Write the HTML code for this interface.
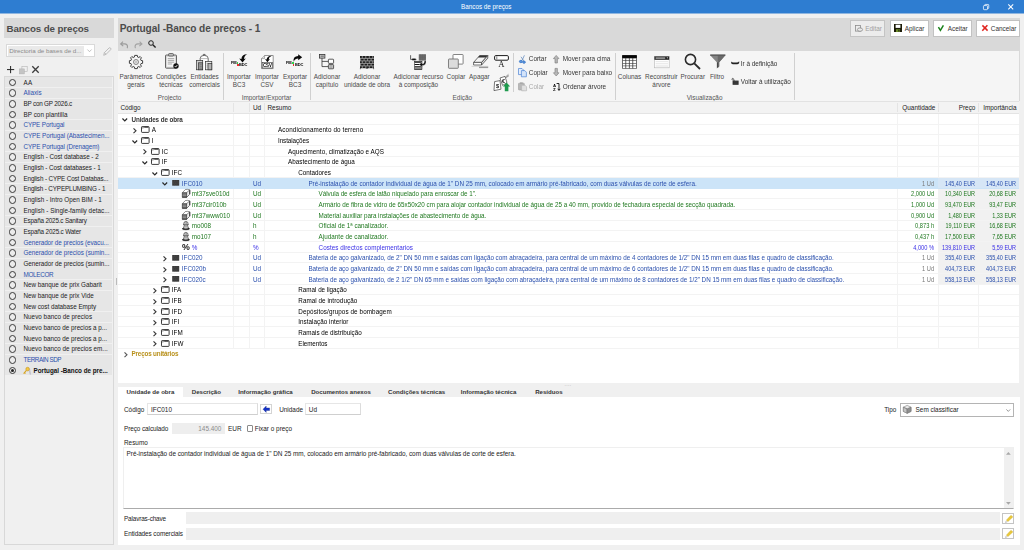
<!DOCTYPE html><html><head><meta charset="utf-8"><title>Bancos de preços</title><style>
*{box-sizing:border-box;margin:0;padding:0}
html,body{width:1024px;height:550px;overflow:hidden;background:#f0f0f0}
body{font-family:"Liberation Sans",sans-serif;font-size:6.4px;color:#000;position:relative;line-height:1}
.a{position:absolute;white-space:nowrap}
.t{position:absolute;white-space:nowrap;line-height:8px;height:8px}
.c{text-align:center}
.r{text-align:right}
.b{font-weight:bold}
.bl{color:#2b50ad}
.gr{color:#1f781f}
.pu{color:#3a2fe6}
.gy{color:#777}
.btn{position:absolute;top:19.5px;height:17px;background:#fff;border:1px solid #c2c2c2}
.sep{position:absolute;top:52.6px;height:47.4px;width:1px;background:#d0d0d0}
.row{position:absolute;left:118px;width:901.4px;height:10.67px;border-bottom:0.55px solid #f3f3f3;font-size:6.3px}
.li{position:absolute;left:5.3px;width:107.2px;height:10.1px;background:#e6e6e6;font-size:6.3px}
.rad{position:absolute;left:3.5px;top:1.35px;width:7.5px;height:7.5px;border:1px solid #3a3a3a;border-radius:50%;background:#ebebeb}
svg{position:absolute;overflow:visible}
</style></head><body>
<div class="a" style="left:0;top:0;width:1024px;height:13px;background:#2e7dd1"></div>
<div class="a" style="left:0;top:13px;width:1024px;height:1px;background:#8fb6e0"></div>
<div class="t c" style="left:436.3px;width:100px;top:2.9px;color:#fff;font-size:6.3px">Bancos de preços</div>
<svg style="left:982.6px;top:3.9px" width="6.2" height="6.2" viewBox="0 0 7 7" fill="none" stroke="#fff" stroke-width="0.85"><rect x="0.5" y="1.8" width="4.6" height="4.6" rx="0.8"/><path d="M1.9 1.8V1.2Q1.9 0.5 2.6 0.5H5.8Q6.5 0.5 6.5 1.2V4.4Q6.5 5.1 5.8 5.1H5.1"/></svg>
<svg style="left:1008.2px;top:3.9px" width="5.9" height="6.1" viewBox="0 0 6 6" stroke="#fff" stroke-width="1.05"><path d="M0.3 0.3L5.3 5.3M5.3 0.3L0.3 5.3"/></svg>
<div class="a" style="left:4.3px;top:18.2px;width:109.4px;height:19.8px;background:#d9d9d9"></div>
<div class="a b" style="left:6.5px;top:22.1px;font-size:9.75px;color:#4c4c4c;font-weight:bold;letter-spacing:-0.1px;line-height:14px">Bancos de preços</div>
<div class="a" style="left:6px;top:44.3px;width:88.8px;height:13.2px;background:#fff;border:0.6px solid #d9d9d9"></div>
<div class="a" style="left:7.8px;top:46px;width:76.4px;height:9.8px;background:#e9e9e9"></div>
<div class="t" style="left:9.2px;top:47.2px;font-size:6.2px;color:#8a8a8a">Directoria de bases de d...</div>
<svg style="left:87.3px;top:49.3px" width="5" height="3.5" viewBox="0 0 5 3.5" fill="none" stroke="#999" stroke-width="0.6"><path d="M0.4 0.5L2.5 2.7L4.6 0.5"/></svg>
<svg style="left:102.5px;top:46.5px" width="9" height="9" viewBox="0 0 9 9" fill="none" stroke="#a8a8a8" stroke-width="0.7"><path d="M0.7 8.3L1.4 5.6L6 1Q6.8 0.3 7.6 1.1Q8.4 1.9 7.7 2.7L3.1 7.3Z M1.4 5.6L3.1 7.3"/></svg>
<svg style="left:6.8px;top:66.2px" width="7.2" height="7.2" viewBox="0 0 7.2 7.2" stroke="#222" stroke-width="1"><path d="M3.6 0V7.2M0 3.6H7.2"/></svg>
<svg style="left:18.6px;top:65.5px" width="8.6" height="8.2" viewBox="0 0 8.6 8.2"><rect x="2.9" y="0.4" width="5.3" height="5.3" fill="#f0f0f0" stroke="#b4b4b4" stroke-width="0.6"/><rect x="0.3" y="2.9" width="5" height="5" fill="#c4c4c4" stroke="#b0b0b0" stroke-width="0.5"/></svg>
<svg style="left:31.5px;top:66.3px" width="7" height="7" viewBox="0 0 7 7" stroke="#3c3c3c" stroke-width="1.3"><path d="M0.3 0.3L6.7 6.7M6.7 0.3L0.3 6.7"/></svg>
<div class="a" style="left:4.3px;top:76px;width:109.4px;height:469.4px;background:#f0f0f0;border:0.6px solid #d8d8d8"></div>
<div class="li" style="top:77.40px"><div class="rad"></div><div class="t" style="left:18.2px;top:1.60px;color:#222;letter-spacing:0.396px;">AA</div></div>
<div class="li" style="top:88.07px"><div class="rad"></div><div class="t bl" style="left:18.2px;top:0.93px;letter-spacing:-0.017px;">Aliaxis</div></div>
<div class="li" style="top:98.73px"><div class="rad"></div><div class="t" style="left:18.2px;top:1.27px;color:#222;letter-spacing:-0.194px;">BP con GP 2026.c</div></div>
<div class="li" style="top:109.40px"><div class="rad"></div><div class="t" style="left:18.2px;top:1.60px;color:#222;letter-spacing:0.046px;">BP con plantilla</div></div>
<div class="li" style="top:120.07px"><div class="rad"></div><div class="t bl" style="left:18.2px;top:0.93px;letter-spacing:-0.114px;">CYPE Portugal</div></div>
<div class="li" style="top:130.73px"><div class="rad"></div><div class="t bl" style="left:18.2px;top:1.27px;letter-spacing:-0.064px;">CYPE Portugal (Abastecimen...</div></div>
<div class="li" style="top:141.40px"><div class="rad"></div><div class="t bl" style="left:18.2px;top:1.60px;letter-spacing:-0.075px;">CYPE Portugal (Drenagem)</div></div>
<div class="li" style="top:152.07px"><div class="rad"></div><div class="t" style="left:18.2px;top:0.93px;color:#222;letter-spacing:-0.030px;">English - Cost database - 2</div></div>
<div class="li" style="top:162.73px"><div class="rad"></div><div class="t" style="left:18.2px;top:1.27px;color:#222;letter-spacing:-0.068px;">English - Cost databases - 1</div></div>
<div class="li" style="top:173.40px"><div class="rad"></div><div class="t" style="left:18.2px;top:1.60px;color:#222;letter-spacing:-0.124px;">English - CYPE Cost Databas...</div></div>
<div class="li" style="top:184.07px"><div class="rad"></div><div class="t" style="left:18.2px;top:0.93px;color:#222;letter-spacing:-0.137px;">English - CYPEPLUMBING - 1</div></div>
<div class="li" style="top:194.73px"><div class="rad"></div><div class="t" style="left:18.2px;top:1.27px;color:#222;letter-spacing:0.012px;">English - Intro Open BIM - 1</div></div>
<div class="li" style="top:205.40px"><div class="rad"></div><div class="t" style="left:18.2px;top:1.60px;color:#222;letter-spacing:0.044px;">English - Single-family detac...</div></div>
<div class="li" style="top:216.07px"><div class="rad"></div><div class="t" style="left:18.2px;top:0.93px;color:#222;letter-spacing:-0.166px;">España 2025.c Sanitary</div></div>
<div class="li" style="top:226.73px"><div class="rad"></div><div class="t" style="left:18.2px;top:1.27px;color:#222;letter-spacing:-0.147px;">España 2025.c Water</div></div>
<div class="li" style="top:237.40px"><div class="rad"></div><div class="t bl" style="left:18.2px;top:1.60px;letter-spacing:-0.053px;">Generador de precios (evacu...</div></div>
<div class="li" style="top:248.07px"><div class="rad"></div><div class="t bl" style="left:18.2px;top:0.93px;letter-spacing:-0.026px;">Generador de precios (sumin...</div></div>
<div class="li" style="top:258.73px"><div class="rad"></div><div class="t" style="left:18.2px;top:1.27px;color:#222;letter-spacing:-0.026px;">Generador de precios (sumin...</div></div>
<div class="li" style="top:269.40px"><div class="rad"></div><div class="t bl" style="left:18.2px;top:1.60px;letter-spacing:-0.292px;">MOLECOR</div></div>
<div class="li" style="top:280.07px"><div class="rad"></div><div class="t" style="left:18.2px;top:0.93px;color:#222;letter-spacing:-0.010px;">New banque de prix Gabarit</div></div>
<div class="li" style="top:290.73px"><div class="rad"></div><div class="t" style="left:18.2px;top:1.27px;color:#222;letter-spacing:-0.004px;">New banque de prix Vide</div></div>
<div class="li" style="top:301.40px"><div class="rad"></div><div class="t" style="left:18.2px;top:1.60px;color:#222;letter-spacing:-0.022px;">New cost database Empty</div></div>
<div class="li" style="top:312.07px"><div class="rad"></div><div class="t" style="left:18.2px;top:0.93px;color:#222;letter-spacing:0.031px;">Nuevo banco de precios</div></div>
<div class="li" style="top:322.73px"><div class="rad"></div><div class="t" style="left:18.2px;top:1.27px;color:#222;letter-spacing:-0.004px;">Nuevo banco de precios a p...</div></div>
<div class="li" style="top:333.40px"><div class="rad"></div><div class="t" style="left:18.2px;top:1.60px;color:#222;letter-spacing:-0.004px;">Nuevo banco de precios a p...</div></div>
<div class="li" style="top:344.07px"><div class="rad"></div><div class="t" style="left:18.2px;top:0.93px;color:#222;letter-spacing:0.019px;">Nuevo banco de precios em...</div></div>
<div class="li" style="top:354.73px"><div class="rad"></div><div class="t bl" style="left:18.2px;top:1.27px;letter-spacing:-0.436px;">TERRAIN SDP</div></div>
<div class="li" style="top:365.40px"><div class="rad"><div class="a" style="left:1.15px;top:1.15px;width:3.2px;height:3.2px;border-radius:50%;background:#222"></div></div><svg style="left:17.8px;top:1.2px" width="8.4" height="7.8" viewBox="0 0 8.4 7.8"><path d="M6.6 1.6L7.6 7.4M6.2 3.4L7.2 7.6" stroke="#b8b8c4" stroke-width="0.7" fill="none"/><circle cx="4.6" cy="2.1" r="1.8" fill="#f5c842" stroke="#b8860b" stroke-width="0.5"/><path d="M3.4 3.3L0.6 6.6M1.5 5.6L2.5 6.5" stroke="#d9a520" stroke-width="1.1" fill="none"/></svg><div class="t b" style="left:28.3px;top:1.60px;color:#111;letter-spacing:-0.019px;">Portugal -Banco de pre...</div></div>
<div class="a" style="left:115.6px;top:278px;width:0.6px;height:7px;background:#bbb"></div>
<div class="a" style="left:118px;top:18.2px;width:902px;height:32.6px;background:#d9d9d9"></div>
<div class="a b" style="left:119.7px;top:22.1px;font-size:10.15px;color:#4c4c4c;letter-spacing:-0.1px;line-height:14px">Portugal -Banco de preços - 1</div>
<svg style="left:120.4px;top:41px" width="8.6" height="7.5" viewBox="0 0 8 7" fill="none" stroke="#9c9c9c" stroke-width="1.05"><path d="M2.8 0.5L0.6 2.7L3 4.8M0.8 2.7H4.4Q7 2.9 7 5.2Q7 6 6.6 6.6"/></svg>
<svg style="left:133.6px;top:41px" width="8.6" height="7.5" viewBox="0 0 8 7" fill="none" stroke="#a4a4a4" stroke-width="1.05"><path d="M5.2 0.5L7.4 2.7L5 4.8M7.2 2.7H3.6Q1 2.9 1 5.2Q1 6 1.4 6.6"/></svg>
<svg style="left:147.8px;top:40.2px" width="8" height="8" viewBox="0 0 8 8" fill="none" stroke="#222" stroke-width="1"><circle cx="3" cy="3" r="2.3"/><path d="M4.8 4.8L7.6 7.6" stroke-width="1.4"/></svg>
<div class="btn" style="left:850px;width:35.4px;background:#ececec;border-color:#c4c4c4"></div>
<div class="btn" style="left:889.6px;width:39px"></div>
<div class="btn" style="left:932.6px;width:39.2px"></div>
<div class="btn" style="left:976px;width:43.8px"></div>
<svg style="left:855.2px;top:24.6px" width="8" height="7.5" viewBox="0 0 8 7.5" fill="none" stroke="#8c8c8c" stroke-width="0.8"><rect x="0.5" y="0.5" width="5" height="5.6"/><ellipse cx="5" cy="4.6" rx="2.6" ry="1.7" fill="#ececec"/></svg>
<div class="t" style="left:865.2px;top:24.8px;color:#a0a0a0">Editar</div>
<svg style="left:894.4px;top:24.4px" width="8" height="8" viewBox="0 0 8 8"><rect x="0" y="0" width="8" height="8" fill="#1c1c08"/><rect x="1.6" y="0.7" width="4.8" height="3.2" fill="#fff"/><rect x="2" y="5.2" width="4" height="2.8" fill="#6c8a2a"/><rect x="4.4" y="5.7" width="1" height="1.8" fill="#111"/></svg>
<div class="t" style="left:904.8px;top:24.8px;color:#333">Aplicar</div>
<svg style="left:938.4px;top:24.8px" width="6" height="6.4" viewBox="0 0 6 6.4" fill="none" stroke="#1a801a" stroke-width="1.5"><path d="M0.4 2.2L2.4 5.4L5.4 0.4"/></svg>
<div class="t" style="left:947.8px;top:24.8px;color:#333">Aceitar</div>
<svg style="left:981.6px;top:25px" width="6" height="6" viewBox="0 0 6 6" fill="none" stroke="#e0241f" stroke-width="1.5"><path d="M0.4 0.4L5.6 5.6M5.4 0.2L0.3 5.8"/></svg>
<div class="t" style="left:990.8px;top:24.8px;color:#333">Cancelar</div>
<div class="a" style="left:118px;top:50.8px;width:902px;height:50.4px;background:#f5f5f5;border-right:0.6px solid #d9d9d9"></div>
<div class="sep" style="left:223px;"></div>
<div class="sep" style="left:309.6px;"></div>
<div class="sep" style="left:513.4px;height:39.5px;"></div>
<div class="sep" style="left:615px;"></div>
<div class="sep" style="left:794px;"></div>
<div class="t c" style="left:106.0px;width:60px;top:72.5px;color:#4a4a4a">Parâmetros</div>
<div class="t c" style="left:106.0px;width:60px;top:80.7px;color:#4a4a4a">gerais</div>
<div class="t c" style="left:141.0px;width:60px;top:72.5px;color:#4a4a4a">Condições</div>
<div class="t c" style="left:141.0px;width:60px;top:80.7px;color:#4a4a4a">técnicas</div>
<div class="t c" style="left:174.6px;width:60px;top:72.5px;color:#4a4a4a">Entidades</div>
<div class="t c" style="left:174.6px;width:60px;top:80.7px;color:#4a4a4a">comerciais</div>
<div class="t c" style="left:129.6px;width:80px;top:93.6px;color:#555">Projecto</div>
<div class="t c" style="left:209.0px;width:60px;top:72.5px;color:#4a4a4a">Importar</div>
<div class="t c" style="left:209.0px;width:60px;top:80.7px;color:#4a4a4a">BC3</div>
<div class="t c" style="left:237.0px;width:60px;top:72.5px;color:#4a4a4a">Importar</div>
<div class="t c" style="left:237.0px;width:60px;top:80.7px;color:#4a4a4a">CSV</div>
<div class="t c" style="left:265.0px;width:60px;top:72.5px;color:#4a4a4a">Exportar</div>
<div class="t c" style="left:265.0px;width:60px;top:80.7px;color:#4a4a4a">BC3</div>
<div class="t c" style="left:226.5px;width:80px;top:93.6px;color:#555">Importar/Exportar</div>
<div class="t c" style="left:297.0px;width:60px;top:72.5px;color:#4a4a4a">Adicionar</div>
<div class="t c" style="left:297.0px;width:60px;top:80.7px;color:#4a4a4a">capítulo</div>
<div class="t c" style="left:337.0px;width:60px;top:72.5px;color:#4a4a4a">Adicionar</div>
<div class="t c" style="left:337.0px;width:60px;top:80.7px;color:#4a4a4a">unidade de obra</div>
<div class="t c" style="left:378.4px;width:80px;top:72.5px;color:#4a4a4a">Adicionar recurso</div>
<div class="t c" style="left:378.4px;width:80px;top:80.7px;color:#4a4a4a">à composição</div>
<div class="t c" style="left:426.0px;width:60px;top:72.5px;color:#4a4a4a">Copiar</div>
<div class="t c" style="left:449.4px;width:60px;top:72.5px;color:#4a4a4a">Apagar</div>
<div class="t c" style="left:422.4px;width:80px;top:93.6px;color:#555">Edição</div>
<div class="t c" style="left:599.6px;width:60px;top:72.5px;color:#4a4a4a">Colunas</div>
<div class="t c" style="left:631.4px;width:60px;top:72.5px;color:#4a4a4a">Reconstruir</div>
<div class="t c" style="left:631.4px;width:60px;top:80.7px;color:#4a4a4a">árvore</div>
<div class="t c" style="left:662.8px;width:60px;top:72.5px;color:#4a4a4a">Procurar</div>
<div class="t c" style="left:687.0px;width:60px;top:72.5px;color:#4a4a4a">Filtro</div>
<div class="t c" style="left:664.6px;width:80px;top:93.6px;color:#555">Visualização</div>
<svg style="left:129px;top:54.7px" width="14" height="14" viewBox="-7 -7 14 14" fill="none" stroke="#2c2c2c" stroke-width="0.9"><path d="M-1.3 -6.6H1.3L1.7 -4.9L2.7 -4.5L4.2 -5.4L5.4 -4.2L4.5 -2.7L4.9 -1.7L6.6 -1.3V1.3L4.9 1.7L4.5 2.7L5.4 4.2L4.2 5.4L2.7 4.5L1.7 4.9L1.3 6.6H-1.3L-1.7 4.9L-2.7 4.5L-4.2 5.4L-5.4 4.2L-4.5 2.7L-4.9 1.7L-6.6 1.3V-1.3L-4.9 -1.7L-4.5 -2.7L-5.4 -4.2L-4.2 -5.4L-2.7 -4.5L-1.7 -4.9Z" stroke-linejoin="round"/><circle r="2.5" stroke="#555" stroke-width="0.7"/><circle r="1" stroke="#888" stroke-width="0.5"/></svg>
<svg style="left:164.8px;top:53.4px" width="14" height="16" viewBox="0 0 14 16"><rect x="0.5" y="2" width="11" height="13.2" rx="0.8" fill="#d6d6d6" stroke="#444" stroke-width="0.8"/><rect x="3.6" y="0.5" width="4.8" height="2.6" rx="0.8" fill="#bdbdbd" stroke="#444" stroke-width="0.7"/><rect x="1.9" y="3.9" width="8.2" height="9.8" fill="#f4f4f4"/><path d="M2.8 5.6H9.2M2.8 7.4H9.2M2.8 9.2H9.2M2.8 11H7" stroke="#8a8a8a" stroke-width="0.7"/><circle cx="11" cy="13" r="2.7" fill="#111"/><path d="M9.7 13L10.7 14.1L12.4 11.9" stroke="#fff" stroke-width="0.8" fill="none"/></svg>
<svg style="left:196px;top:53.6px" width="16.4" height="16.4" viewBox="0 0 16.4 16.4" stroke="#333" stroke-width="0.7"><path d="M4.2 15.8V4.4Q4.2 1.4 8.2 1.4Q12.2 1.4 12.2 4.4V15.8" fill="#fff"/><path d="M7.3 1.5V0.4H9.1V1.5" fill="none"/><path d="M4.4 4.6H12" fill="none" stroke="#777" stroke-width="0.5"/><rect x="0.5" y="6.4" width="6.2" height="9.4" fill="#cfcfcf"/><rect x="2.6" y="8.8" width="4.1" height="7" fill="#9a9a9a"/><rect x="9.6" y="7.4" width="6.2" height="8.4" fill="#ececec"/><rect x="12" y="9.6" width="3.8" height="6.2" fill="#b4b4b4"/><path d="M10.6 9.4H11.8M10.6 11.2H11.8M10.6 13H11.8M3.6 10.6H5.8M3.6 12.4H5.8M3.6 14.2H5.8" stroke="#666" stroke-width="0.5"/></svg>
<div class="a b" style="left:230.6px;top:60.9px;font-size:4px;color:#000;letter-spacing:-0.15px;line-height:4.6px;will-change:transform">FIE</div><div class="a" style="left:236.5px;top:62px;width:1.7px;height:1.8px;background:#2fd24a"></div><div class="a" style="left:237.0px;top:64.4px;width:1.8px;height:1.7px;background:#ee2a2e"></div><div class="a b" style="left:239.3px;top:62.9px;font-size:4px;color:#000;letter-spacing:-0.15px;line-height:4.6px;will-change:transform">BDC</div>
<svg style="left:238.6px;top:53.6px" width="8.6" height="8.6" viewBox="0 0 8.6 8.6"><path d="M8.3 0.2Q2.6 0.4 2.4 4.9L0.2 4.4L3.5 8.4L6.8 4.4L5 4.9Q5.2 1.6 8.3 0.2Z" fill="#0a0a0a"/></svg>
<svg style="left:260.8px;top:54.8px;will-change:transform" width="12.8" height="14.2" viewBox="0 0 12.8 14.2"><path d="M0.5 3.6L3.6 0.5H12.2V13.6H0.5Z" fill="#fff" stroke="#6a6a6a" stroke-width="0.7"/><path d="M0.5 3.6H3.6V0.5" fill="#ddd" stroke="#6a6a6a" stroke-width="0.5"/><rect x="1.2" y="7.6" width="10.4" height="5.4" fill="#fff" stroke="#333" stroke-width="0.6"/><path d="M10.8 0.8Q6 1 5.6 4.5L4 4.1L6.4 7.3L9 4.1L7.6 4.5Q7.8 2 10.8 0.8Z" fill="#0a0a0a"/><text x="6.4" y="12.3" font-family="Liberation Sans,sans-serif" font-size="5.2" font-weight="bold" fill="#000" text-anchor="middle" textLength="9" lengthAdjust="spacingAndGlyphs">CSV</text></svg>
<div class="a b" style="left:286.2px;top:60.9px;font-size:4px;color:#000;letter-spacing:-0.15px;line-height:4.6px;will-change:transform">FIE</div><div class="a" style="left:292.1px;top:62px;width:1.7px;height:1.8px;background:#2fd24a"></div><div class="a" style="left:292.6px;top:64.4px;width:1.8px;height:1.7px;background:#ee2a2e"></div><div class="a b" style="left:294.9px;top:62.9px;font-size:4px;color:#000;letter-spacing:-0.15px;line-height:4.6px;will-change:transform">BDC</div>
<svg style="left:293.4px;top:53.6px" width="9.4" height="8" viewBox="0 0 9.4 8"><path d="M0.6 7.7Q-0.2 2.2 5.2 1.9V0.2L9.2 3.2L5.2 6.3V4.6Q2.2 4.6 0.6 7.7Z" fill="#0a0a0a"/></svg>
<svg style="left:319px;top:54px" width="15.2" height="15.6" viewBox="0 0 15.2 15.6" stroke="#333" stroke-width="0.8"><path d="M3 4V12.6H9.6M3 7.4H9.6" fill="none"/><rect x="0.5" y="0.5" width="5.4" height="3.6" fill="#d0d0d0"/><rect x="1.5" y="1.4" width="3.4" height="1.6" fill="#888" stroke="none"/><rect x="9.4" y="5.2" width="5.2" height="4.2" rx="0.6" fill="#fff"/><rect x="9.4" y="10.6" width="5.2" height="4.2" rx="0.6" fill="#ddd"/><path d="M10.4 11.9H13.6M10.4 13.2H13.6" stroke="#666" stroke-width="0.6"/></svg>
<svg style="left:360px;top:55.6px" width="14" height="13.4" viewBox="0 0 14 13.4"><rect x="0" y="0" width="14" height="12.2" fill="#1c1c1c"/><path d="M0 2.4H14M0 4.9H14M0 7.4H14M0 9.9H14" stroke="#b4b4b4" stroke-width="0.7"/><path d="M2.3 0V2.4M5.8 0V2.4M9.3 0V2.4M12.8 0V2.4M0.6 2.4V4.9M4.1 2.4V4.9M7.6 2.4V4.9M11.1 2.4V4.9M2.3 4.9V7.4M5.8 4.9V7.4M9.3 4.9V7.4M12.8 4.9V7.4M0.6 7.4V9.9M4.1 7.4V9.9M7.6 7.4V9.9M11.1 7.4V9.9M2.3 9.9V12.2M5.8 9.9V12.2M9.3 9.9V12.2M12.8 9.9V12.2" stroke="#b4b4b4" stroke-width="0.7"/><path d="M0.4 12.2V13.2M13.6 12.2V13.2M6.4 12.2V13M7.6 12.2V13" stroke="#222" stroke-width="0.7"/></svg>
<svg style="left:410px;top:53.6px" width="16.6" height="15.6" viewBox="0 0 16.6 15.6"><path d="M0.6 1.2V5.4H6.4" fill="none" stroke="#222" stroke-width="0.7"/><rect x="2.2" y="4.6" width="3.4" height="1.7" fill="#111"/><rect x="8.8" y="0.2" width="7.2" height="6.4" fill="#707070"/><path d="M8.8 1.8H16M8.8 3.4H16M8.8 5H16M10.6 0.2V6.6M12.4 0.2V6.6M14.2 0.2V6.6" stroke="#5a5a5a" stroke-width="0.3"/><rect x="4.6" y="7.2" width="7.4" height="8.2" fill="#fff" stroke="#111" stroke-width="0.5"/><path d="M4.6 8.1H12M4.6 10.5H12M4.6 12.9H12M4.6 15H12" stroke="#111" stroke-width="1.2"/><path d="M16 6.4Q16.4 11.6 12.2 11.4L12.3 13L9 10.6L12 8.2L12.1 9.8Q14.6 10 14.4 6.4Z" fill="#111" stroke="#f5f5f5" stroke-width="0.3"/></svg>
<svg style="left:448.4px;top:54.2px" width="15.6" height="14.8" viewBox="0 0 15.6 14.8"><rect x="5" y="0.5" width="10.1" height="9.6" rx="0.6" fill="#fff" stroke="#666" stroke-width="0.8"/><rect x="0.5" y="5" width="9.8" height="9.3" rx="0.6" fill="#dcdcdc" stroke="#666" stroke-width="0.8"/></svg>
<svg style="left:470.8px;top:54.6px" width="17.6" height="13.2" viewBox="0 0 17.6 13.2"><path d="M0.6 11.4H17.2" stroke="#c0c0c0" stroke-width="0.6"/><path d="M8 12.4H17.2" stroke="#999" stroke-width="1.4"/><path d="M2.6 7.4L8.6 0.6H16.8L10.6 7.4Z" fill="#f4f4f4" stroke="#333" stroke-width="0.7"/><path d="M8.6 0.6H16.8L15.2 2.4H7Z" fill="#333"/><path d="M2.6 7.4H10.6V10H2.6Z" fill="#fff" stroke="#333" stroke-width="0.7"/><path d="M10.6 7.4L16.8 0.6V3.2L10.6 10Z" fill="#e0e0e0" stroke="#333" stroke-width="0.7"/></svg>
<svg style="left:494.2px;top:54.6px;will-change:transform" width="15" height="12" viewBox="0 0 15 12"><rect x="0.6" y="0.6" width="13.8" height="4.6" rx="1.2" fill="#fff" stroke="#1a1a1a" stroke-width="1"/><path d="M2.8 1.4V4.4" stroke="#222" stroke-width="0.6"/><text x="7.4" y="11.6" font-family="Liberation Serif,serif" font-size="8.6" fill="#111" text-anchor="middle">A</text></svg>
<svg style="left:492.8px;top:73.6px" width="17.6" height="17.6" viewBox="0 0 17.6 17.6"><path d="M7 4L12 2.4L14 8.6L9.6 11.4Z" fill="#fff" stroke="#222" stroke-width="0.6"/><path d="M12.4 3.2L15.4 0.4M13.2 3.6L16 1.6" stroke="#222" stroke-width="0.5"/><text x="10.6" y="9.4" font-family="Liberation Sans,sans-serif" font-size="5.4" font-weight="bold" fill="#111" text-anchor="middle">€</text><path d="M1.6 7.6L7 6.6L8 15.2L1 16.6Z" fill="#fff" stroke="#222" stroke-width="0.6"/><text x="4.6" y="14.2" font-family="Liberation Sans,sans-serif" font-size="5.6" font-weight="bold" fill="#111" text-anchor="middle">$</text><path d="M13.6 8.4L17.2 12.4H15.4V17.2H11.8V12.4H10Z" fill="#1f9a4e"/></svg>
<svg style="left:518.6px;top:54.6px" width="7.4" height="8.6" viewBox="0 0 7.4 8.6" fill="none" stroke="#3b78c8" stroke-width="0.8"><path d="M5.4 0.3L3 5.6M2 1.8L5 6.2" stroke="#6a8fc0"/><ellipse cx="1.9" cy="6.5" rx="1.5" ry="1.2" fill="#5b93dc"/><ellipse cx="5" cy="7.2" rx="1.4" ry="1.1" fill="#5b93dc"/></svg>
<svg style="left:517.8px;top:68px" width="9.2" height="9.2" viewBox="0 0 9.2 9.2"><path d="M0.5 0.5H4L5.4 1.9V6.6H0.5Z" fill="#e4eefc" stroke="#4a82d4" stroke-width="0.7"/><path d="M3.4 2.6H6.8L8.4 4.2V8.8H3.4Z" fill="#d4e4fa" stroke="#4a82d4" stroke-width="0.7"/></svg>
<svg style="left:517.8px;top:81.8px" width="9.2" height="9.2" viewBox="0 0 9.2 9.2"><rect x="0.5" y="1.2" width="5.8" height="6.8" rx="0.6" fill="#b8b8b8" stroke="#a0a0a0" stroke-width="0.6"/><rect x="2" y="0.4" width="2.8" height="1.6" fill="#a8a8a8"/><path d="M3.6 3.2H7L8.6 4.8V8.8H3.6Z" fill="#e0e0e0" stroke="#b0b0b0" stroke-width="0.6"/></svg>
<svg style="left:552.8px;top:54.8px" width="6.4" height="8.4" viewBox="0 0 6.4 8.4"><path d="M3.2 0.4L6 3.6H4.4V8H2V3.6H0.4Z" fill="#b8b8b8" stroke="#777" stroke-width="0.6"/></svg>
<svg style="left:552.8px;top:68.4px" width="6.4" height="8.4" viewBox="0 0 6.4 8.4"><path d="M3.2 8L6 4.8H4.4V0.4H2V4.8H0.4Z" fill="#b8b8b8" stroke="#777" stroke-width="0.6"/></svg>
<svg style="left:552.6px;top:82.6px;will-change:transform" width="7.4" height="7.8" viewBox="0 0 7.4 7.8"><text x="0" y="3.5" font-family="Liberation Sans,sans-serif" font-size="4.3" font-weight="bold" fill="#000">A</text><text x="0.1" y="7.6" font-family="Liberation Sans,sans-serif" font-size="4.3" font-weight="bold" fill="#000">Z</text><path d="M3.6 0.5H6V7.2M4.8 5.8L6 7.4L7.2 5.8" fill="none" stroke="#111" stroke-width="0.9"/></svg>
<svg style="left:622.4px;top:55px" width="15" height="14" viewBox="0 0 15 14"><rect x="0.2" y="0.2" width="14.6" height="13.6" rx="0.6" fill="#3a3a3a"/><rect x="0.2" y="0.2" width="14.6" height="2.7" fill="#050505"/><g fill="#fff"><rect x="0.9" y="3.4" width="2.5" height="2.0"/><rect x="0.9" y="6.0" width="2.5" height="2.0"/><rect x="0.9" y="8.6" width="2.5" height="2.0"/><rect x="0.9" y="11.2" width="2.5" height="2.0"/><rect x="4.2" y="3.4" width="2.7" height="2.0"/><rect x="4.2" y="6.0" width="2.7" height="2.0"/><rect x="4.2" y="8.6" width="2.7" height="2.0"/><rect x="4.2" y="11.2" width="2.7" height="2.0"/><rect x="7.7" y="3.4" width="2.7" height="2.0"/><rect x="7.7" y="6.0" width="2.7" height="2.0"/><rect x="7.7" y="8.6" width="2.7" height="2.0"/><rect x="7.7" y="11.2" width="2.7" height="2.0"/><rect x="11.2" y="3.4" width="2.9" height="2.0"/><rect x="11.2" y="6.0" width="2.9" height="2.0"/><rect x="11.2" y="8.6" width="2.9" height="2.0"/><rect x="11.2" y="11.2" width="2.9" height="2.0"/></g></svg>
<svg style="left:653.6px;top:55.6px" width="15.6" height="12.2" viewBox="0 0 15.6 12.2"><rect x="0.4" y="0.4" width="14.8" height="11.4" fill="#fff" stroke="#b4b4b4" stroke-width="0.6"/><rect x="0.4" y="0.4" width="14.8" height="3.4" fill="#222"/><rect x="1.6" y="1.3" width="9.6" height="1.6" fill="#9a9a9a"/><path d="M12.6 1.6L13.4 2.6L14.2 1.6Z" fill="#fff"/><path d="M1.6 5.6H14M1.6 7.4H14M1.6 9.2H14M1.6 10.8H14" stroke="#d0d0d0" stroke-width="0.5"/></svg>
<svg style="left:684.2px;top:53.4px" width="17" height="17" viewBox="0 0 17 17" fill="none" stroke="#2a2a2a"><circle cx="6.5" cy="6.5" r="5.1" stroke-width="1.6"/><path d="M10.3 10.3L16 16" stroke-width="1.8"/></svg>
<svg style="left:709.6px;top:54.2px" width="15.6" height="14.8" viewBox="0 0 15.6 14.8"><path d="M0.4 1.4H15.2L9.2 8.2V12.4L6.8 14.6V8.2Z" fill="#858585"/><path d="M7.8 1.4H15.2L9.2 8.2V12.4L7.8 13.7Z" fill="#6a6a6a"/><path d="M0.2 0.4H15.4V1.9H0.2Z" fill="#555"/><path d="M7.6 8.4V13.6" stroke="#333" stroke-width="0.8"/></svg>
<svg style="left:730.6px;top:61.2px" width="8.4" height="3.8" viewBox="0 0 8.4 3.8"><path d="M0.2 0.4Q1 1.6 3 1.4H5.6Q7.4 1.4 8.2 0.2V2Q7.4 3.4 5.6 3.2H2.6Q0.8 3.4 0.2 2.2Z" fill="#222"/></svg>
<svg style="left:730.8px;top:78px" width="8" height="7" viewBox="0 0 8 7"><path d="M0.4 1.4L1.8 0.3L3 1.4M1.8 0.6V2.2H4" fill="none" stroke="#222" stroke-width="0.6"/><rect x="1.6" y="2.6" width="6" height="4.2" fill="#2a2a2a"/><path d="M2.4 3.8H6.8M2.4 5.2H6.8" stroke="#666" stroke-width="0.4"/></svg>

<div class="t" style="left:528.8px;top:55.0px;color:#333">Cortar</div>
<div class="t" style="left:528.8px;top:68.6px;color:#333">Copiar</div>
<div class="t" style="left:528.8px;top:83.0px;color:#aaa">Colar</div>
<div class="t" style="left:562.8px;top:55.0px;color:#333">Mover para cima</div>
<div class="t" style="left:562.8px;top:68.6px;color:#333">Mover para baixo</div>
<div class="t" style="left:562.8px;top:83.0px;color:#333">Ordenar árvore</div>
<div class="t" style="left:740.8px;top:60.0px;color:#333">Ir à definição</div>
<div class="t" style="left:740.8px;top:77.6px;color:#333">Voltar à utilização</div>
<div class="a" style="left:118px;top:100.8px;width:901.4px;height:12.9px;background:#f3f3f3;border-bottom:0.6px solid #e4e4e4;border-top:0.6px solid #e2e2e2"></div>
<div class="a" style="left:233.4px;top:103.2px;width:0.6px;height:8.6px;background:#e4e4e4"></div>
<div class="a" style="left:249.3px;top:103.2px;width:0.6px;height:8.6px;background:#e4e4e4"></div>
<div class="a" style="left:264.2px;top:103.2px;width:0.6px;height:8.6px;background:#e4e4e4"></div>
<div class="a" style="left:897.3px;top:103.2px;width:0.6px;height:8.6px;background:#e4e4e4"></div>
<div class="a" style="left:937.6px;top:103.2px;width:0.6px;height:8.6px;background:#e4e4e4"></div>
<div class="a" style="left:978.1px;top:103.2px;width:0.6px;height:8.6px;background:#e4e4e4"></div>
<div class="t" style="left:120.4px;top:104.2px;color:#222">Código</div>
<div class="t" style="left:252.9px;top:104.2px;color:#222">Ud</div>
<div class="t" style="left:267.5px;top:104.2px;color:#222">Resumo</div>
<div class="t r" style="left:880px;width:55.4px;top:104.2px;color:#222">Quantidade</div>
<div class="t r" style="left:940px;width:35.4px;top:104.2px;color:#222">Preço</div>
<div class="t r" style="left:960px;width:56.6px;top:104.2px;color:#222">Importância</div>
<div class="a" style="left:118px;top:113.9px;width:901.4px;height:269.1px;background:#fff"></div>
<div class="a" style="left:233.4px;top:113.9px;width:0.6px;height:234.7px;background:#f3f3f3"></div>
<div class="a" style="left:249.3px;top:113.9px;width:0.6px;height:234.7px;background:#f3f3f3"></div>
<div class="a" style="left:264.2px;top:113.9px;width:0.6px;height:234.7px;background:#f3f3f3"></div>
<div class="a" style="left:897.3px;top:113.9px;width:0.6px;height:234.7px;background:#f3f3f3"></div>
<div class="a" style="left:937.6px;top:113.9px;width:0.6px;height:234.7px;background:#f3f3f3"></div>
<div class="a" style="left:978.1px;top:113.9px;width:0.6px;height:234.7px;background:#f3f3f3"></div>
<div class="row" style="top:113.90px;"><svg style="left:4.2px;top:4.3px" width="5.6" height="3.7" viewBox="0 0 5.4 3.6" fill="none" stroke="#2a2a2a" stroke-width="1.15"><path d="M0.4 0.5L2.7 2.9L5 0.5"/></svg><div class="t b" style="left:13.5px;top:2.10px;color:#333;letter-spacing:-0.104px;">Unidades de obra</div></div>
<div class="row" style="top:124.57px;"><svg style="left:15.2px;top:3.3px" width="3.7" height="5.6" viewBox="0 0 3.6 5.4" fill="none" stroke="#333" stroke-width="1.1"><path d="M0.5 0.4L2.9 2.7L0.5 5"/></svg><svg style="left:23.4px;top:1.7px" width="8.6" height="7" viewBox="0 0 8.6 7" fill="#fff" stroke="#333" stroke-width="0.95"><rect x="0.5" y="0.6" width="7.6" height="5.8" rx="0.6"/><path d="M3.4 1.1H7.6" stroke-width="1.2"/><path d="M0.8 1.9H2.6L3.4 1.1" fill="none" stroke-width="0.6"/></svg><div class="t " style="left:33.8px;top:1.43px">A</div><div class="t " style="left:160.0px;top:1.43px;letter-spacing:0.111px;">Acondicionamento do terreno</div></div>
<div class="row" style="top:135.23px;"><svg style="left:14.2px;top:4.3px" width="5.6" height="3.7" viewBox="0 0 5.4 3.6" fill="none" stroke="#2a2a2a" stroke-width="1.15"><path d="M0.4 0.5L2.7 2.9L5 0.5"/></svg><svg style="left:23.4px;top:1.7px" width="8.6" height="7" viewBox="0 0 8.6 7" fill="#fff" stroke="#333" stroke-width="0.95"><rect x="0.5" y="0.6" width="7.6" height="5.8" rx="0.6"/><path d="M3.4 1.1H7.6" stroke-width="1.2"/><path d="M0.8 1.9H2.6L3.4 1.1" fill="none" stroke-width="0.6"/></svg><div class="t " style="left:33.8px;top:1.77px">I</div><div class="t " style="left:160.0px;top:1.77px;letter-spacing:-0.077px;">Instalações</div></div>
<div class="row" style="top:145.90px;"><svg style="left:25.2px;top:3.3px" width="3.7" height="5.6" viewBox="0 0 3.6 5.4" fill="none" stroke="#333" stroke-width="1.1"><path d="M0.5 0.4L2.9 2.7L0.5 5"/></svg><svg style="left:33.4px;top:1.7px" width="8.6" height="7" viewBox="0 0 8.6 7" fill="#fff" stroke="#333" stroke-width="0.95"><rect x="0.5" y="0.6" width="7.6" height="5.8" rx="0.6"/><path d="M3.4 1.1H7.6" stroke-width="1.2"/><path d="M0.8 1.9H2.6L3.4 1.1" fill="none" stroke-width="0.6"/></svg><div class="t " style="left:43.8px;top:2.10px">IC</div><div class="t " style="left:170.1px;top:2.10px;letter-spacing:0.030px;">Aquecimento, climatização e AQS</div></div>
<div class="row" style="top:156.57px;"><svg style="left:24.2px;top:4.3px" width="5.6" height="3.7" viewBox="0 0 5.4 3.6" fill="none" stroke="#2a2a2a" stroke-width="1.15"><path d="M0.4 0.5L2.7 2.9L5 0.5"/></svg><svg style="left:33.4px;top:1.7px" width="8.6" height="7" viewBox="0 0 8.6 7" fill="#fff" stroke="#333" stroke-width="0.95"><rect x="0.5" y="0.6" width="7.6" height="5.8" rx="0.6"/><path d="M3.4 1.1H7.6" stroke-width="1.2"/><path d="M0.8 1.9H2.6L3.4 1.1" fill="none" stroke-width="0.6"/></svg><div class="t " style="left:43.8px;top:1.43px">IF</div><div class="t " style="left:170.1px;top:1.43px;letter-spacing:0.025px;">Abastecimento de água</div></div>
<div class="row" style="top:167.23px;"><svg style="left:34.2px;top:4.3px" width="5.6" height="3.7" viewBox="0 0 5.4 3.6" fill="none" stroke="#2a2a2a" stroke-width="1.15"><path d="M0.4 0.5L2.7 2.9L5 0.5"/></svg><svg style="left:43.4px;top:1.7px" width="8.6" height="7" viewBox="0 0 8.6 7" fill="#fff" stroke="#333" stroke-width="0.95"><rect x="0.5" y="0.6" width="7.6" height="5.8" rx="0.6"/><path d="M3.4 1.1H7.6" stroke-width="1.2"/><path d="M0.8 1.9H2.6L3.4 1.1" fill="none" stroke-width="0.6"/></svg><div class="t " style="left:53.8px;top:1.77px">IFC</div><div class="t " style="left:180.3px;top:1.77px;letter-spacing:0.003px;">Contadores</div></div>
<div class="row" style="top:177.90px;background:#cce4f8;border-bottom-color:#cce4f8;"><svg style="left:44.2px;top:4.3px" width="5.6" height="3.7" viewBox="0 0 5.4 3.6" fill="none" stroke="#2a2a2a" stroke-width="1.15"><path d="M0.4 0.5L2.7 2.9L5 0.5"/></svg><svg style="left:54.0px;top:2.5px" width="7.4" height="5.7" viewBox="0 0 7.6 6.2"><rect width="7.6" height="6.2" fill="#3a3a3a"/><path d="M0 2H7.6M0 4.1H7.6M2.5 0V2M5 0V2M1.3 2V4.1M3.8 2V4.1M6.3 2V4.1M2.5 4.1V6.2M5 4.1V6.2" stroke="#555" stroke-width="0.3"/></svg><div class="t bl" style="left:63.8px;top:2.10px">IFC010</div><div class="t bl" style="left:134.9px;top:2.10px">Ud</div><div class="t bl" style="left:190.4px;top:2.10px;letter-spacing:0.013px;">Pré-instalação de contador individual de água de 1" DN 25 mm, colocado em armário pré-fabricado, com duas válvulas de corte de esfera.</div><div class="a" style="left:820.2px;top:0;width:81.2px;height:10.1px;background:#d6e6f6"></div><div class="t r gy" style="left:760px;width:56.1px;top:2.10px;transform:scaleX(0.905);transform-origin:100% 50%">1 Ud</div><div class="t r bl" style="left:800px;width:57.1px;top:2.10px;transform:scaleX(0.875);transform-origin:100% 50%">145,40 EUR</div><div class="t r bl" style="left:840px;width:58.1px;top:2.10px;transform:scaleX(0.875);transform-origin:100% 50%">145,40 EUR</div></div>
<div class="row" style="top:188.57px;"><svg style="left:63.8px;top:0.9px" width="8.2" height="8.8" viewBox="0 0 8.2 8.8" stroke="#333" stroke-width="0.55"><path d="M0.4 3.6L3.4 0.5Q5.8 0 7.8 0.9V5.2L4.6 8.4H0.4Z" fill="#fff"/><path d="M4.6 3.6L7.8 0.9V5.2L4.6 8.4Z" fill="#eee"/><path d="M0.4 3.6H4.6V8.4H0.4Z" fill="#555"/><path d="M0.6 5.1H4.4M0.6 6.7H4.4" stroke="#ddd" stroke-width="0.5"/><path d="M7.6 1.2V5" stroke="#222" stroke-width="0.7"/></svg><div class="t gr" style="left:73.8px;top:1.43px">mt37sve010d</div><div class="t gr" style="left:134.9px;top:1.43px">Ud</div><div class="t gr" style="left:200.6px;top:1.43px;letter-spacing:-0.044px;">Válvula de esfera de latão niquelado para enroscar de 1".</div><div class="a" style="left:820.2px;top:0;width:81.2px;height:10.1px;background:#f1f1f1"></div><div class="t r gr" style="left:760px;width:56.1px;top:1.43px;transform:scaleX(0.905);transform-origin:100% 50%">2,000 Ud</div><div class="t r gr" style="left:800px;width:57.1px;top:1.43px;transform:scaleX(0.875);transform-origin:100% 50%">10,340 EUR</div><div class="t r gr" style="left:840px;width:58.1px;top:1.43px;transform:scaleX(0.875);transform-origin:100% 50%">20,68 EUR</div></div>
<div class="row" style="top:199.23px;"><svg style="left:63.8px;top:0.9px" width="8.2" height="8.8" viewBox="0 0 8.2 8.8" stroke="#333" stroke-width="0.55"><path d="M0.4 3.6L3.4 0.5Q5.8 0 7.8 0.9V5.2L4.6 8.4H0.4Z" fill="#fff"/><path d="M4.6 3.6L7.8 0.9V5.2L4.6 8.4Z" fill="#eee"/><path d="M0.4 3.6H4.6V8.4H0.4Z" fill="#555"/><path d="M0.6 5.1H4.4M0.6 6.7H4.4" stroke="#ddd" stroke-width="0.5"/><path d="M7.6 1.2V5" stroke="#222" stroke-width="0.7"/></svg><div class="t gr" style="left:73.8px;top:1.77px">mt37cir010b</div><div class="t gr" style="left:134.9px;top:1.77px">Ud</div><div class="t gr" style="left:200.6px;top:1.77px;letter-spacing:-0.016px;">Armário de fibra de vidro de 65x50x20 cm para alojar contador individual de água de 25 a 40 mm, provido de fechadura especial de secção quadrada.</div><div class="a" style="left:820.2px;top:0;width:81.2px;height:10.1px;background:#f1f1f1"></div><div class="t r gr" style="left:760px;width:56.1px;top:1.77px;transform:scaleX(0.905);transform-origin:100% 50%">1,000 Ud</div><div class="t r gr" style="left:800px;width:57.1px;top:1.77px;transform:scaleX(0.875);transform-origin:100% 50%">93,470 EUR</div><div class="t r gr" style="left:840px;width:58.1px;top:1.77px;transform:scaleX(0.875);transform-origin:100% 50%">93,47 EUR</div></div>
<div class="row" style="top:209.90px;"><svg style="left:63.8px;top:0.9px" width="8.2" height="8.8" viewBox="0 0 8.2 8.8" stroke="#333" stroke-width="0.55"><path d="M0.4 3.6L3.4 0.5Q5.8 0 7.8 0.9V5.2L4.6 8.4H0.4Z" fill="#fff"/><path d="M4.6 3.6L7.8 0.9V5.2L4.6 8.4Z" fill="#eee"/><path d="M0.4 3.6H4.6V8.4H0.4Z" fill="#555"/><path d="M0.6 5.1H4.4M0.6 6.7H4.4" stroke="#ddd" stroke-width="0.5"/><path d="M7.6 1.2V5" stroke="#222" stroke-width="0.7"/></svg><div class="t gr" style="left:73.8px;top:2.10px">mt37www010</div><div class="t gr" style="left:134.9px;top:2.10px">Ud</div><div class="t gr" style="left:200.6px;top:2.10px;letter-spacing:-0.029px;">Material auxiliar para instalações de abastecimento de água.</div><div class="a" style="left:820.2px;top:0;width:81.2px;height:10.1px;background:#f1f1f1"></div><div class="t r gr" style="left:760px;width:56.1px;top:2.10px;transform:scaleX(0.905);transform-origin:100% 50%">0,900 Ud</div><div class="t r gr" style="left:800px;width:57.1px;top:2.10px;transform:scaleX(0.875);transform-origin:100% 50%">1,480 EUR</div><div class="t r gr" style="left:840px;width:58.1px;top:2.10px;transform:scaleX(0.875);transform-origin:100% 50%">1,33 EUR</div></div>
<div class="row" style="top:220.57px;"><svg style="left:64.0px;top:0.6px" width="7.8" height="9" viewBox="0 0 7.8 9" fill="#fff" stroke="#222" stroke-width="0.55"><ellipse cx="3.9" cy="7.7" rx="3.6" ry="1.05" fill="#111"/><path d="M1.6 7.4Q1.5 5.4 2.4 4.8H5.4Q6.3 5.4 6.2 7.4Q3.9 8.2 1.6 7.4Z"/><path d="M2 6.2H5.8" stroke-width="0.4"/><path d="M1.5 3.6Q1.5 0.4 3.9 0.4Q6.3 0.4 6.3 3.6Z" fill="#eee"/><path d="M1.2 3.7H6.6M3.1 0.6V3.6M4.7 0.6V3.6" stroke-width="0.45"/><path d="M2.2 3.8V4.8H5.6V3.8" fill="#fff"/></svg><div class="t gr" style="left:73.8px;top:1.43px">mo008</div><div class="t gr" style="left:134.9px;top:1.43px">h</div><div class="t gr" style="left:200.6px;top:1.43px;letter-spacing:0.015px;">Oficial de 1ª canalizador.</div><div class="a" style="left:820.2px;top:0;width:81.2px;height:10.1px;background:#f1f1f1"></div><div class="t r gr" style="left:760px;width:56.1px;top:1.43px;transform:scaleX(0.905);transform-origin:100% 50%">0,873 h</div><div class="t r gr" style="left:800px;width:57.1px;top:1.43px;transform:scaleX(0.875);transform-origin:100% 50%">19,110 EUR</div><div class="t r gr" style="left:840px;width:58.1px;top:1.43px;transform:scaleX(0.875);transform-origin:100% 50%">16,68 EUR</div></div>
<div class="row" style="top:231.23px;"><svg style="left:64.0px;top:0.6px" width="7.8" height="9" viewBox="0 0 7.8 9" fill="#fff" stroke="#222" stroke-width="0.55"><ellipse cx="3.9" cy="7.7" rx="3.6" ry="1.05" fill="#111"/><path d="M1.6 7.4Q1.5 5.4 2.4 4.8H5.4Q6.3 5.4 6.2 7.4Q3.9 8.2 1.6 7.4Z"/><path d="M2 6.2H5.8" stroke-width="0.4"/><path d="M1.5 3.6Q1.5 0.4 3.9 0.4Q6.3 0.4 6.3 3.6Z" fill="#eee"/><path d="M1.2 3.7H6.6M3.1 0.6V3.6M4.7 0.6V3.6" stroke-width="0.45"/><path d="M2.2 3.8V4.8H5.6V3.8" fill="#fff"/></svg><div class="t gr" style="left:73.8px;top:1.77px">mo107</div><div class="t gr" style="left:134.9px;top:1.77px">h</div><div class="t gr" style="left:200.6px;top:1.77px;letter-spacing:0.026px;">Ajudante de canalizador.</div><div class="a" style="left:820.2px;top:0;width:81.2px;height:10.1px;background:#f1f1f1"></div><div class="t r gr" style="left:760px;width:56.1px;top:1.77px;transform:scaleX(0.905);transform-origin:100% 50%">0,437 h</div><div class="t r gr" style="left:800px;width:57.1px;top:1.77px;transform:scaleX(0.875);transform-origin:100% 50%">17,500 EUR</div><div class="t r gr" style="left:840px;width:58.1px;top:1.77px;transform:scaleX(0.875);transform-origin:100% 50%">7,65 EUR</div></div>
<div class="row" style="top:241.90px;"><div class="a b" style="left:64.1px;top:0.4px;font-size:9.8px;line-height:10px;color:#111;transform:scaleX(0.9);transform-origin:0 0">%</div><div class="t pu" style="left:73.8px;top:2.10px">%</div><div class="t pu" style="left:134.9px;top:2.10px">%</div><div class="t pu" style="left:200.6px;top:2.10px;letter-spacing:0.042px;">Costes directos complementarios</div><div class="a" style="left:820.2px;top:0;width:81.2px;height:10.1px;background:#f1f1f1"></div><div class="t r pu" style="left:760px;width:56.1px;top:2.10px;transform:scaleX(0.905);transform-origin:100% 50%">4,000 %</div><div class="t r pu" style="left:800px;width:57.1px;top:2.10px;transform:scaleX(0.875);transform-origin:100% 50%">139,810 EUR</div><div class="t r pu" style="left:840px;width:58.1px;top:2.10px;transform:scaleX(0.875);transform-origin:100% 50%">5,59 EUR</div></div>
<div class="row" style="top:252.57px;"><svg style="left:45.2px;top:3.3px" width="3.7" height="5.6" viewBox="0 0 3.6 5.4" fill="none" stroke="#333" stroke-width="1.1"><path d="M0.5 0.4L2.9 2.7L0.5 5"/></svg><svg style="left:54.0px;top:2.5px" width="7.4" height="5.7" viewBox="0 0 7.6 6.2"><rect width="7.6" height="6.2" fill="#3a3a3a"/><path d="M0 2H7.6M0 4.1H7.6M2.5 0V2M5 0V2M1.3 2V4.1M3.8 2V4.1M6.3 2V4.1M2.5 4.1V6.2M5 4.1V6.2" stroke="#555" stroke-width="0.3"/></svg><div class="t bl" style="left:63.8px;top:1.43px">IFC020</div><div class="t bl" style="left:134.9px;top:1.43px">Ud</div><div class="t bl" style="left:190.4px;top:1.43px;letter-spacing:-0.019px;">Bateria de aço galvanizado, de 2" DN 50 mm e saídas com ligação com abraçadeira, para central de um máximo de 4 contadores de 1/2" DN 15 mm em duas filas e quadro de classificação.</div><div class="a" style="left:820.2px;top:0;width:81.2px;height:10.1px;background:#f1f1f1"></div><div class="t r gy" style="left:760px;width:56.1px;top:1.43px;transform:scaleX(0.905);transform-origin:100% 50%">1 Ud</div><div class="t r bl" style="left:800px;width:57.1px;top:1.43px;transform:scaleX(0.875);transform-origin:100% 50%">355,40 EUR</div><div class="t r bl" style="left:840px;width:58.1px;top:1.43px;transform:scaleX(0.875);transform-origin:100% 50%">355,40 EUR</div></div>
<div class="row" style="top:263.23px;"><svg style="left:45.2px;top:3.3px" width="3.7" height="5.6" viewBox="0 0 3.6 5.4" fill="none" stroke="#333" stroke-width="1.1"><path d="M0.5 0.4L2.9 2.7L0.5 5"/></svg><svg style="left:54.0px;top:2.5px" width="7.4" height="5.7" viewBox="0 0 7.6 6.2"><rect width="7.6" height="6.2" fill="#3a3a3a"/><path d="M0 2H7.6M0 4.1H7.6M2.5 0V2M5 0V2M1.3 2V4.1M3.8 2V4.1M6.3 2V4.1M2.5 4.1V6.2M5 4.1V6.2" stroke="#555" stroke-width="0.3"/></svg><div class="t bl" style="left:63.8px;top:1.77px">IFC020b</div><div class="t bl" style="left:134.9px;top:1.77px">Ud</div><div class="t bl" style="left:190.4px;top:1.77px;letter-spacing:-0.019px;">Bateria de aço galvanizado, de 2" DN 50 mm e saídas com ligação com abraçadeira, para central de um máximo de 6 contadores de 1/2" DN 15 mm em duas filas e quadro de classificação.</div><div class="a" style="left:820.2px;top:0;width:81.2px;height:10.1px;background:#f1f1f1"></div><div class="t r gy" style="left:760px;width:56.1px;top:1.77px;transform:scaleX(0.905);transform-origin:100% 50%">1 Ud</div><div class="t r bl" style="left:800px;width:57.1px;top:1.77px;transform:scaleX(0.875);transform-origin:100% 50%">404,73 EUR</div><div class="t r bl" style="left:840px;width:58.1px;top:1.77px;transform:scaleX(0.875);transform-origin:100% 50%">404,73 EUR</div></div>
<div class="row" style="top:273.90px;"><svg style="left:45.2px;top:3.3px" width="3.7" height="5.6" viewBox="0 0 3.6 5.4" fill="none" stroke="#333" stroke-width="1.1"><path d="M0.5 0.4L2.9 2.7L0.5 5"/></svg><svg style="left:54.0px;top:2.5px" width="7.4" height="5.7" viewBox="0 0 7.6 6.2"><rect width="7.6" height="6.2" fill="#3a3a3a"/><path d="M0 2H7.6M0 4.1H7.6M2.5 0V2M5 0V2M1.3 2V4.1M3.8 2V4.1M6.3 2V4.1M2.5 4.1V6.2M5 4.1V6.2" stroke="#555" stroke-width="0.3"/></svg><div class="t bl" style="left:63.8px;top:2.10px">IFC020c</div><div class="t bl" style="left:134.9px;top:2.10px">Ud</div><div class="t bl" style="left:190.4px;top:2.10px;letter-spacing:-0.019px;">Bateria de aço galvanizado, de 2 1/2" DN 65 mm e saídas com ligação com abraçadeira, para central de um máximo de 8 contadores de 1/2" DN 15 mm em duas filas e quadro de classificação.</div><div class="a" style="left:820.2px;top:0;width:81.2px;height:10.1px;background:#f1f1f1"></div><div class="t r gy" style="left:760px;width:56.1px;top:2.10px;transform:scaleX(0.905);transform-origin:100% 50%">1 Ud</div><div class="t r bl" style="left:800px;width:57.1px;top:2.10px;transform:scaleX(0.875);transform-origin:100% 50%">558,13 EUR</div><div class="t r bl" style="left:840px;width:58.1px;top:2.10px;transform:scaleX(0.875);transform-origin:100% 50%">558,13 EUR</div></div>
<div class="row" style="top:284.57px;"><svg style="left:35.2px;top:3.3px" width="3.7" height="5.6" viewBox="0 0 3.6 5.4" fill="none" stroke="#333" stroke-width="1.1"><path d="M0.5 0.4L2.9 2.7L0.5 5"/></svg><svg style="left:43.4px;top:1.7px" width="8.6" height="7" viewBox="0 0 8.6 7" fill="#fff" stroke="#333" stroke-width="0.95"><rect x="0.5" y="0.6" width="7.6" height="5.8" rx="0.6"/><path d="M3.4 1.1H7.6" stroke-width="1.2"/><path d="M0.8 1.9H2.6L3.4 1.1" fill="none" stroke-width="0.6"/></svg><div class="t " style="left:53.8px;top:1.43px">IFA</div><div class="t " style="left:180.3px;top:1.43px;letter-spacing:-0.019px;">Ramal de ligação</div></div>
<div class="row" style="top:295.23px;"><svg style="left:35.2px;top:3.3px" width="3.7" height="5.6" viewBox="0 0 3.6 5.4" fill="none" stroke="#333" stroke-width="1.1"><path d="M0.5 0.4L2.9 2.7L0.5 5"/></svg><svg style="left:43.4px;top:1.7px" width="8.6" height="7" viewBox="0 0 8.6 7" fill="#fff" stroke="#333" stroke-width="0.95"><rect x="0.5" y="0.6" width="7.6" height="5.8" rx="0.6"/><path d="M3.4 1.1H7.6" stroke-width="1.2"/><path d="M0.8 1.9H2.6L3.4 1.1" fill="none" stroke-width="0.6"/></svg><div class="t " style="left:53.8px;top:1.77px">IFB</div><div class="t " style="left:180.3px;top:1.77px;letter-spacing:0.043px;">Ramal de introdução</div></div>
<div class="row" style="top:305.90px;"><svg style="left:35.2px;top:3.3px" width="3.7" height="5.6" viewBox="0 0 3.6 5.4" fill="none" stroke="#333" stroke-width="1.1"><path d="M0.5 0.4L2.9 2.7L0.5 5"/></svg><svg style="left:43.4px;top:1.7px" width="8.6" height="7" viewBox="0 0 8.6 7" fill="#fff" stroke="#333" stroke-width="0.95"><rect x="0.5" y="0.6" width="7.6" height="5.8" rx="0.6"/><path d="M3.4 1.1H7.6" stroke-width="1.2"/><path d="M0.8 1.9H2.6L3.4 1.1" fill="none" stroke-width="0.6"/></svg><div class="t " style="left:53.8px;top:2.10px">IFD</div><div class="t " style="left:180.3px;top:2.10px;letter-spacing:0.087px;">Depósitos/grupos de bombagem</div></div>
<div class="row" style="top:316.57px;"><svg style="left:35.2px;top:3.3px" width="3.7" height="5.6" viewBox="0 0 3.6 5.4" fill="none" stroke="#333" stroke-width="1.1"><path d="M0.5 0.4L2.9 2.7L0.5 5"/></svg><svg style="left:43.4px;top:1.7px" width="8.6" height="7" viewBox="0 0 8.6 7" fill="#fff" stroke="#333" stroke-width="0.95"><rect x="0.5" y="0.6" width="7.6" height="5.8" rx="0.6"/><path d="M3.4 1.1H7.6" stroke-width="1.2"/><path d="M0.8 1.9H2.6L3.4 1.1" fill="none" stroke-width="0.6"/></svg><div class="t " style="left:53.8px;top:1.43px">IFI</div><div class="t " style="left:180.3px;top:1.43px;letter-spacing:0.026px;">Instalação interior</div></div>
<div class="row" style="top:327.23px;"><svg style="left:35.2px;top:3.3px" width="3.7" height="5.6" viewBox="0 0 3.6 5.4" fill="none" stroke="#333" stroke-width="1.1"><path d="M0.5 0.4L2.9 2.7L0.5 5"/></svg><svg style="left:43.4px;top:1.7px" width="8.6" height="7" viewBox="0 0 8.6 7" fill="#fff" stroke="#333" stroke-width="0.95"><rect x="0.5" y="0.6" width="7.6" height="5.8" rx="0.6"/><path d="M3.4 1.1H7.6" stroke-width="1.2"/><path d="M0.8 1.9H2.6L3.4 1.1" fill="none" stroke-width="0.6"/></svg><div class="t " style="left:53.8px;top:1.77px">IFM</div><div class="t " style="left:180.3px;top:1.77px;letter-spacing:-0.016px;">Ramais de distribuição</div></div>
<div class="row" style="top:337.90px;"><svg style="left:35.2px;top:3.3px" width="3.7" height="5.6" viewBox="0 0 3.6 5.4" fill="none" stroke="#333" stroke-width="1.1"><path d="M0.5 0.4L2.9 2.7L0.5 5"/></svg><svg style="left:43.4px;top:1.7px" width="8.6" height="7" viewBox="0 0 8.6 7" fill="#fff" stroke="#333" stroke-width="0.95"><rect x="0.5" y="0.6" width="7.6" height="5.8" rx="0.6"/><path d="M3.4 1.1H7.6" stroke-width="1.2"/><path d="M0.8 1.9H2.6L3.4 1.1" fill="none" stroke-width="0.6"/></svg><div class="t " style="left:53.8px;top:2.10px">IFW</div><div class="t " style="left:180.3px;top:2.10px;letter-spacing:-0.071px;">Elementos</div></div>
<div class="a" style="left:118px;top:348.57px;width:900px;height:10.67px;font-size:6.3px"><svg style="left:5.6px;top:3.3px" width="3.7" height="5.6" viewBox="0 0 3.6 5.4" fill="none" stroke="#555" stroke-width="1.1"><path d="M0.5 0.4L2.9 2.7L0.5 5"/></svg><div class="t b" style="left:13.5px;top:1.43px;color:#b8901a;letter-spacing:-0.164px;">Preços unitários</div></div>
<div class="t" style="left:564.6px;top:380.2px;color:#aaa;font-size:5px;letter-spacing:0.3px">....</div>
<div class="a" style="left:118px;top:387.2px;width:65.4px;height:11px;background:#fff"></div>
<div class="a" style="left:118px;top:396.8px;width:901.6px;height:148.7px;background:#fff"></div>
<div class="t b" style="left:126.6px;top:388.4px;color:#333;font-size:6.1px">Unidade de obra</div>
<div class="t b" style="left:191.8px;top:388.4px;color:#333;font-size:6.1px">Descrição</div>
<div class="t b" style="left:238.2px;top:388.4px;color:#333;font-size:6.1px">Informação gráfica</div>
<div class="t b" style="left:311.2px;top:388.4px;color:#333;font-size:6.1px">Documentos anexos</div>
<div class="t b" style="left:388px;top:388.4px;color:#333;font-size:6.1px">Condições técnicas</div>
<div class="t b" style="left:460.8px;top:388.4px;color:#333;font-size:6.1px">Informação técnica</div>
<div class="t b" style="left:535.2px;top:388.4px;color:#333;font-size:6.1px">Resíduos</div>
<div class="t" style="left:124px;top:406.2px;color:#222">Código</div>
<div class="a" style="left:147.4px;top:403.3px;width:110.4px;height:11.4px;background:#fff;border:0.6px solid #e6e6e6;border-bottom-color:#cfcfcf;border-right-color:#dcdcdc"></div>
<div class="t" style="left:151px;top:406.2px;color:#222">IFC010</div>
<div class="a" style="left:260px;top:403.6px;width:11.8px;height:10.6px;background:#fff;border:0.6px solid #d4d4d4"></div>
<svg style="left:262.6px;top:405.8px" width="6.6" height="6.4" viewBox="0 0 6.6 6.4"><path d="M0 3.2L3.2 0V1.9H6.6V4.5H3.2V6.4Z" fill="#1432c8" stroke="#0a1a70" stroke-width="0.3"/></svg>
<div class="t" style="left:279.2px;top:406.2px;color:#222">Unidade</div>
<div class="a" style="left:305.4px;top:403.3px;width:55.8px;height:11.4px;background:#fff;border:0.6px solid #e6e6e6;border-bottom-color:#cfcfcf;border-right-color:#dcdcdc"></div>
<div class="t" style="left:308.8px;top:406.2px;color:#222">Ud</div>
<div class="t" style="left:884.2px;top:405.8px;color:#222">Tipo</div>
<div class="a" style="left:899.8px;top:403px;width:114px;height:13.8px;background:#fff;border:0.6px solid #b4b4b4"></div>
<svg style="left:903.2px;top:405.4px" width="8.4" height="8.6" viewBox="0 0 7.4 7.6" stroke="#707070" stroke-width="0.45"><path d="M3.7 0.3L7.1 1.9V5.7L3.7 7.3L0.3 5.7V1.9Z" fill="#e8e8e8"/><path d="M0.3 1.9L3.7 3.5V7.3L0.3 5.7Z" fill="#c4c4c4"/><path d="M0.3 1.9L3.7 3.5L7.1 1.9M3.7 3.5V7.3" fill="none"/><path d="M3.7 3.5L7.1 1.9V5.7L3.7 7.3Z" fill="#8f8f8f"/></svg>
<div class="t" style="left:915.6px;top:405.8px;color:#222">Sem classificar</div>
<svg style="left:1005.6px;top:408.6px" width="4.6" height="3.2" viewBox="0 0 4.6 3.2" fill="none" stroke="#555" stroke-width="0.6"><path d="M0.4 0.4L2.3 2.4L4.2 0.4"/></svg>
<div class="t" style="left:124px;top:424.6px;color:#222;letter-spacing:-0.081px;">Preço calculado</div>
<div class="a" style="left:171.8px;top:423px;width:53.2px;height:11.4px;background:#eeeeee"></div>
<div class="t r" style="left:172.6px;width:48.8px;top:424.6px;color:#8c8c8c">145.400</div>
<div class="t" style="left:228px;top:424.6px;color:#222">EUR</div>
<div class="a" style="left:246.6px;top:425.2px;width:6.6px;height:6.6px;background:#fff;border:0.6px solid #8a8a8a;border-radius:1px"></div>
<div class="t" style="left:254.8px;top:424.6px;color:#222">Fixar o preço</div>
<div class="t" style="left:124px;top:438.6px;color:#222">Resumo</div>
<div class="a" style="left:123px;top:447.4px;width:891px;height:61.2px;background:#fff;border:0.6px solid #efefef;border-bottom:0.7px solid #ababab"></div>
<div class="a" style="left:1004.4px;top:448.2px;width:9px;height:59.8px;background:#f0f0f0"></div>
<svg style="left:1006.2px;top:452.2px" width="4.8" height="2.9" viewBox="0 0 4.4 2.6"><path d="M0 2.6L2.2 0L4.4 2.6Z" fill="#a8a8a8"/></svg>
<svg style="left:1006.2px;top:502.2px" width="4.8" height="2.9" viewBox="0 0 4.4 2.6"><path d="M0 0L2.2 2.6L4.4 0Z" fill="#a8a8a8"/></svg>
<div class="t" style="left:126.6px;top:449.6px;color:#222;letter-spacing:-0.024px;">Pré-instalação de contador individual de água de 1" DN 25 mm, colocado em armário pré-fabricado, com duas válvulas de corte de esfera.</div>
<div class="t" style="left:124px;top:514.6px;color:#222;letter-spacing:-0.151px;">Palavras-chave</div>
<div class="a" style="left:185.8px;top:512.2px;width:814.6px;height:12.2px;background:#efefef"></div>
<div class="t" style="left:124px;top:530px;color:#222;letter-spacing:-0.088px;">Entidades comerciais</div>
<div class="a" style="left:185.8px;top:527.6px;width:814.6px;height:12.2px;background:#efefef"></div>
<div class="a" style="left:1002px;top:512.6px;width:11.6px;height:11.6px;background:#fff;border:0.6px solid #c4c4c4"><svg style="left:1.6px;top:1.6px" width="8" height="8" viewBox="0 0 8 8"><path d="M1.2 5.2L5.6 0.6Q6.4 0.2 7.2 1Q7.8 1.8 7.4 2.4L2.8 6.8Z" fill="#e8c83c" stroke="#c9a82c" stroke-width="0.3"/><path d="M1.2 5.2L2.8 6.8L0.5 7.6Z" fill="#ddd"/><path d="M0.5 7.6L0.8 6.6L1.5 7.3Z" fill="#222"/></svg></div>
<div class="a" style="left:1002px;top:527.9px;width:11.6px;height:11.6px;background:#fff;border:0.6px solid #c4c4c4"><svg style="left:1.6px;top:1.6px" width="8" height="8" viewBox="0 0 8 8"><path d="M1.2 5.2L5.6 0.6Q6.4 0.2 7.2 1Q7.8 1.8 7.4 2.4L2.8 6.8Z" fill="#e8c83c" stroke="#c9a82c" stroke-width="0.3"/><path d="M1.2 5.2L2.8 6.8L0.5 7.6Z" fill="#ddd"/><path d="M0.5 7.6L0.8 6.6L1.5 7.3Z" fill="#222"/></svg></div>
</body></html>
